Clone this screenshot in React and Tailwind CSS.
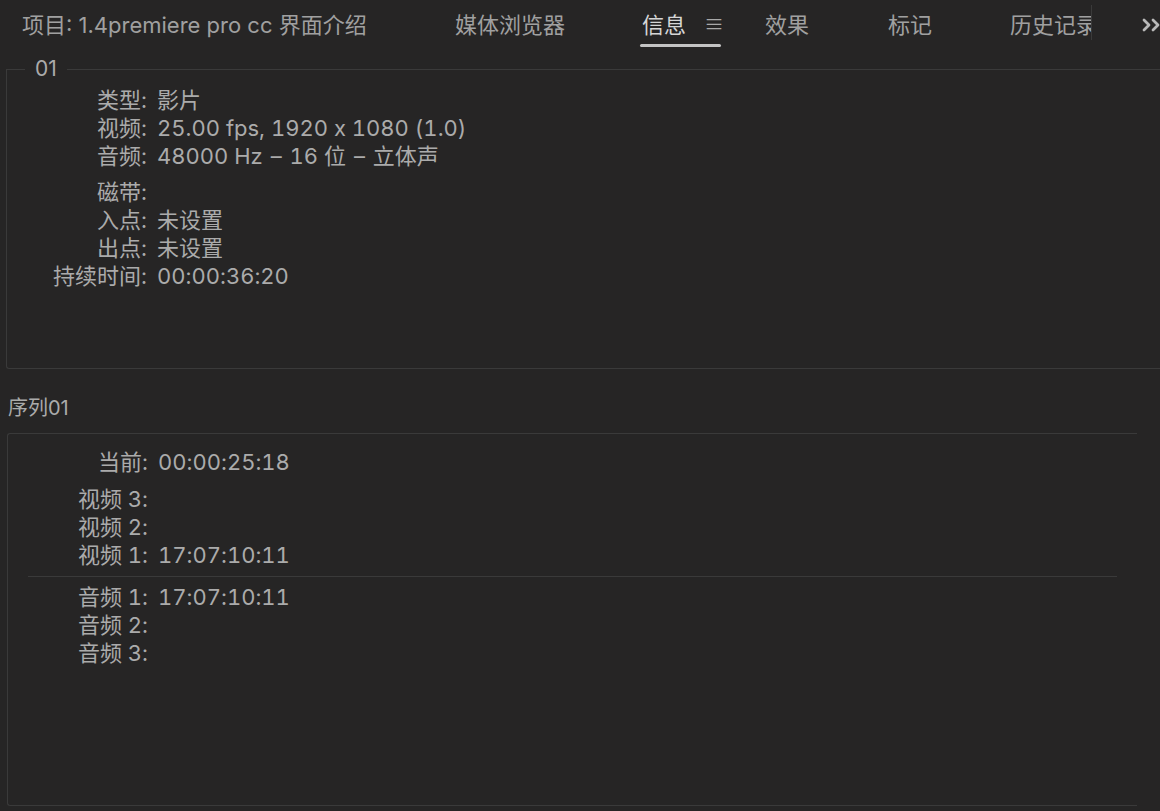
import React from 'react';

const FONT = { fontFamily: 'Inter, "Noto Sans CJK SC", sans-serif' };

const CLIP_ROWS = [
  [
    ['类型:', '影片'],
    ['视频:', '25.00 fps, 1920 x 1080 (1.0)'],
    ['音频:', '48000 Hz\u200A – \u200A16 位\u200A – \u200A立体声'],
  ],
  [
    ['磁带:', ''],
    ['入点:', '未设置'],
    ['出点:', '未设置'],
    ['持续时间:', '00:00:36:20'],
  ],
];

const VIDEO_ROWS = [
  ['视频 3:', ''],
  ['视频 2:', ''],
  ['视频 1:', '17:07:10:11'],
];

const AUDIO_ROWS = [
  ['音频 1:', '17:07:10:11'],
  ['音频 2:', ''],
  ['音频 3:', ''],
];

function Row({ label, value }) {
  return (
    <div className="grid grid-cols-[140px_1fr] leading-[28px] h-[28px] tabular-nums [font-feature-settings:'calt'_0,'tnum'_1]">
      <div className="text-right whitespace-nowrap">{label}</div>
      <div className="pl-[10px] whitespace-pre">{value}</div>
    </div>
  );
}

function Tab({ children, className = '' }) {
  return (
    <div className={`h-[57px] shrink-0 whitespace-nowrap ${className}`}>
      <div className="mt-[11px] leading-[28px]">{children}</div>
    </div>
  );
}

export default function App() {
  return (
    <div className="w-[1160px] h-[811px] overflow-hidden bg-[#262525] text-[#ababab] text-[22px]" style={FONT}>
      {/* tab bar */}
      <div className="flex h-[57px] text-[#a0a0a0]">
        <Tab className="w-[415px] pl-[22px]">项目: 1.4premiere pro cc 界面介绍</Tab>
        <Tab className="w-[187px] pl-[40px]">媒体浏览器</Tab>
        <div className="w-[123px] h-[57px] shrink-0 pl-[38px]">
          <div className="mt-[11px] leading-[28px] flex items-center text-[#d6d6d6]">
            <span className="ml-[2px]">信息</span>
            <span className="ml-[18px] text-[#a8a8a8] text-[20px]">≡</span>
          </div>
          <div className="mt-[5px] w-[81px] h-[3px] bg-[#c4c4c4] rounded-full"></div>
        </div>
        <Tab className="w-[123px] pl-[40px]">效果</Tab>
        <Tab className="w-[122px] pl-[40px]">标记</Tab>
        <div className="w-[122px] h-[35px] mt-[5px] shrink-0 pl-[40px] overflow-hidden whitespace-nowrap border-r border-[#3a3a3a]">
          <div className="mt-[6px] leading-[28px]">历史记录</div>
        </div>
        <div className="ml-[50px] mt-[18px]">
          <svg width="22" height="14" viewBox="0 0 22 14" fill="none" stroke="#b8b8b8" strokeWidth="2.8" strokeLinecap="round" strokeLinejoin="round">
            <polyline points="2,2 7,7 2,12" />
            <polyline points="11,2 16,7 11,12" />
          </svg>
        </div>
      </div>

      {/* clip info */}
      <fieldset className="ml-[6px] w-[1160px] border border-r-0 border-[#3a3a3a] rounded-bl-[3px] p-0 m-0 pb-[78px]">
        <legend className="ml-[18px] px-[10px] leading-[24px] text-[21px] text-[#ababab]">01</legend>
        <div className="pt-[5px]">
          {CLIP_ROWS[0].map(([l, v]) => <Row key={l} label={l} value={v} />)}
          <div className="mt-[8px]">
            {CLIP_ROWS[1].map(([l, v]) => <Row key={l} label={l} value={v} />)}
          </div>
        </div>
      </fieldset>

      {/* sequence */}
      <div className="mt-[25px] ml-[8px] leading-[28px] text-[20px] text-[#ababab]">序列01</div>
      <div className="mt-[11px] ml-[7px] w-[1130px] border border-r-0 border-[#3a3a3a] rounded-l-[3px] pt-[14px] pb-[138px]">
        <Row label="当前:" value="00:00:25:18" />
        <div className="mt-[9px]">
          {VIDEO_ROWS.map(([l, v]) => <Row key={l} label={l} value={v} />)}
        </div>
        <div className="mt-[7px] mx-[20px] h-px bg-[#3a3a3a]"></div>
        <div className="mt-[6px]">
          {AUDIO_ROWS.map(([l, v]) => <Row key={l} label={l} value={v} />)}
        </div>
      </div>
    </div>
  );
}
